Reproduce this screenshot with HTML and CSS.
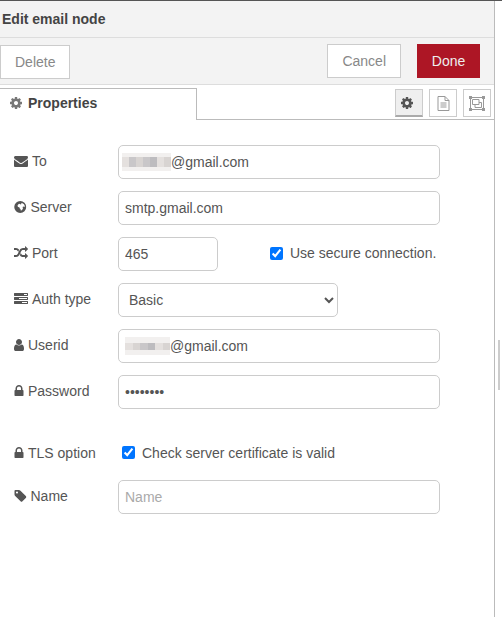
FILE: index.html
```html
<!DOCTYPE html>
<html lang="en">
<head>
<meta charset="utf-8">
<title>Edit email node</title>
<link rel="stylesheet" href="styles.css">
</head>
<body>
<svg class="defs" aria-hidden="true">
  <symbol id="i-cog" viewBox="0 0 1792 1792"><path d="M1152 896q0-106-75-181t-181-75-181 75-75 181 75 181 181 75 181-75 75-181zm512-109v222q0 12-8 23t-20 13l-185 28q-19 54-39 91 35 50 107 138 10 12 10 25t-9 23q-27 37-99 108t-94 71q-12 0-26-9l-138-108q-44 23-91 38-16 136-29 186-7 28-36 28h-222q-14 0-24.500-8.500t-11.500-21.500l-28-184q-49-16-90-37l-141 107q-10 9-25 9-14 0-25-11-126-114-165-168-7-10-7-23 0-12 8-23 15-21 51-66.500t54-70.500q-27-50-41-99l-183-27q-13-2-21-12.500t-8-23.500v-222q0-12 8-23t19-13l186-28q14-46 39-92-40-57-107-138-10-12-10-24 0-10 9-23 26-36 98.500-107.500t94.500-71.500q13 0 26 10l138 107q44-23 91-38 16-136 29-186 7-28 36-28h222q14 0 24.500 8.500t11.500 21.500l28 184q49 16 90 37l142-107q9-9 24-9 13 0 25 10 129 119 165 170 7 8 7 22 0 12-8 23-15 21-51 66.500t-54 70.500q26 50 41 98l183 28q13 2 21 12.500t8 23.500z"/></symbol>
  <symbol id="i-envelope" viewBox="0 0 1792 1792"><path d="M1792 710v794q0 66-47 113t-113 47h-1472q-66 0-113-47t-47-113v-794q44 49 101 87 362 246 497 345 57 42 92.500 65.500t94.500 48 110 24.500h2q51 0 110-24.500t94.500-48 92.500-65.500q170-123 498-345 57-39 100-87zm0-294q0 79-49 151t-122 123q-376 261-468 325-10 7-42.500 30.500t-54 38-52 32.500-57.500 27-50 9h-2q-23 0-50-9t-57.500-27-52-32.500-54-38-42.500-30.500q-91-64-262-182.500t-205-142.500q-62-42-117-115.500t-55-136.500q0-78 41.500-130t118.500-52h1472q65 0 112.500 47t47.500 113z"/></symbol>
  <symbol id="i-globe" viewBox="128 0 1536 1792"><path fill-rule="evenodd" d="M896 128a768 768 0 1 0 0 1536a768 768 0 0 0 0-1536zM1180 400l190 130l110 230l-40 120l-130-60l-120 60l60 170l-100 190l-170 130l-60-220l-110-90l-30-120l-170-60l-70-160l110-170l180-60l90 70l120-60l-50-100z"/></symbol>
  <symbol id="i-random" viewBox="0 0 1792 1792"><path d="M666 481q-60 92-137 273-22-45-37-72.500t-40.500-63.500-51-56.500-63-35-81.500-14.500h-224q-14 0-23-9t-9-23v-192q0-14 9-23t23-9h224q250 0 410 225zm1126 799q0 14-9 23l-320 320q-9 9-23 9-13 0-22.500-9.500t-9.500-22.500v-192q-32 0-85 .5t-81 1-73-1-71-5-64-10.500-63-18.500-58-28.500-59-40-55-53.500-56-69.500q59-93 136-273 22 45 37 72.500t40.500 63.500 51 56.500 63 35 81.500 14.500h256v-192q0-14 9-23t23-9q12 0 24 10l319 319q9 9 9 23zm0-896q0 14-9 23l-320 320q-9 9-23 9-13 0-22.500-9.500t-9.500-22.500v-192h-256q-48 0-87 15t-69 45-51 61.500-45 77.500q-32 62-78 171-29 66-49.500 111t-54 105-64 100-74 83-90 68.500-106.500 42-128 16.500h-224q-14 0-23-9t-9-23v-192q0-14 9-23t23-9h224q48 0 87-15t69-45 51-61.500 45-77.500q32-62 78-171 29-66 49.500-111t54-105 64-100 74-83 90-68.500 106.500-42 128-16.500h256v-192q0-14 9-23t23-9q12 0 24 10l319 319q9 9 9 23z"/></symbol>
  <symbol id="i-tasks" viewBox="0 0 1792 1792"><path d="M1024 1408h640v-128h-640v128zm-384-512h1024v-128h-1024v128zm640-512h384v-128h-384v128zm512 832v256q0 26-19 45t-45 19h-1664q-26 0-45-19t-19-45v-256q0-26 19-45t45-19h1664q26 0 45 19t19 45zm0-512v256q0 26-19 45t-45 19h-1664q-26 0-45-19t-19-45v-256q0-26 19-45t45-19h1664q26 0 45 19t19 45zm0-512v256q0 26-19 45t-45 19h-1664q-26 0-45-19t-19-45v-256q0-26 19-45t45-19h1664q26 0 45 19t19 45z"/></symbol>
  <symbol id="i-user" viewBox="256 0 1280 1792"><path d="M1536 1399q0 109-62.500 187t-150.500 78h-854q-88 0-150.500-78t-62.500-187q0-85 8.500-160.500t31.500-152 58.500-131 94-89 134.500-34.500q131 128 313 128t313-128q76 0 134.500 34.500t94 89 58.500 131 31.500 152 8.500 160.500zm-256-887q0 159-112.500 271.500t-271.500 112.500-271.500-112.500-112.500-271.500 112.500-271.500 271.500-112.500 271.500 112.500 112.500 271.500z"/></symbol>
  <symbol id="i-lock" viewBox="256 0 1280 1792"><path d="M640 768h512v-192q0-106-75-181t-181-75-181 75-75 181v192zm832 96v576q0 40-28 68t-68 28h-960q-40 0-68-28t-28-68v-576q0-40 28-68t68-28h32v-192q0-184 132-316t316-132 316 132 132 316v192h32q40 0 68 28t28 68z"/></symbol>
  <symbol id="i-tag" viewBox="64 0 1600 1792"><path d="M576 448q0-53-37.500-90.500t-90.500-37.500-90.500 37.500-37.500 90.500 37.500 90.500 90.500 37.500 90.500-37.500 37.500-90.500zm1067 576q0 53-37 90l-491 492q-39 37-91 37-53 0-90-37l-715-716q-38-37-64.500-101t-26.500-117v-416q0-52 38-90t90-38h416q53 0 117 26.500t102 64.500l715 714q37 39 37 91z"/></symbol>
</svg>
<div class="shell">
  <main class="panel">
    <header class="title">Edit email node</header>
    <div class="actions">
      <button class="btn btn-delete" type="button">Delete</button>
      <div class="actions-right">
        <button class="btn" type="button">Cancel</button>
        <button class="btn btn-done" type="button">Done</button>
      </div>
    </div>
    <div class="tabs">
      <div class="tab"><svg class="ico tab-ico"><use href="#i-cog"/></svg>Properties</div>
      <div class="tab-tools">
        <span class="tool tool-on"><svg class="ico tool-cog"><use href="#i-cog"/></svg></span>
        <span class="tool"><svg class="tool-svg" viewBox="0 0 13 15"><path class="ln" d="M1 .5h7l4 4v10h-11zM8 .5v4h4M3.500 7h6M3.500 9h6M3.500 11h6"/></svg></span>
        <span class="tool"><svg class="tool-svg tool-wide" viewBox="0 0 16 15"><path class="ln" d="M1.500 1.500h13v12h-13zM3.500 3.500h6.500v5h-6.500zM6 8.500v3h6.500v-5h-2.500"/><path class="nd" d="M0 0h3v3h-3zM13 0h3v3h-3zM0 12h3v3h-3zM13 12h3v3h-3z"/></svg></span>
      </div>
    </div>
    <form class="form">
      <div class="row">
        <label class="lbl"><svg class="ico"><use href="#i-envelope"/></svg>To</label>
        <div class="input wide"><span class="blur blur-to"><i class="b1"></i><i class="b2"></i><i class="b3"></i><i class="b2"></i><i class="b4"></i><i class="b1"></i><i class="b3"></i></span>@gmail.com</div>
      </div>
      <div class="row">
        <label class="lbl"><svg class="ico w12"><use href="#i-globe"/></svg>Server</label>
        <input class="input wide" type="text" value="smtp.gmail.com">
      </div>
      <div class="row">
        <label class="lbl"><svg class="ico"><use href="#i-random"/></svg>Port</label>
        <input class="input port" type="text" value="465">
        <label class="check check-port"><input type="checkbox" checked>Use secure connection.</label>
      </div>
      <div class="row">
        <label class="lbl"><svg class="ico"><use href="#i-tasks"/></svg>Auth type</label>
        <select class="input auth"><option>Basic</option></select>
      </div>
      <div class="row">
        <label class="lbl"><svg class="ico w10"><use href="#i-user"/></svg>Userid</label>
        <div class="input wide"><span class="blur blur-user"><i class="b1"></i><i class="b3"></i><i class="b2"></i><i class="b4"></i><i class="b1"></i><i class="b3"></i></span>@gmail.com</div>
      </div>
      <div class="row">
        <label class="lbl"><svg class="ico w10"><use href="#i-lock"/></svg>Password</label>
        <input class="input wide" type="password" value="password">
      </div>
      <div class="row row-tls">
        <label class="lbl lbl-tls"><svg class="ico w10"><use href="#i-lock"/></svg>TLS option</label>
        <label class="check check-tls"><input type="checkbox" checked>Check server certificate is valid</label>
      </div>
      <div class="row">
        <label class="lbl"><svg class="ico w12"><use href="#i-tag"/></svg>Name</label>
        <input class="input wide" type="text" placeholder="Name">
      </div>
    </form>
  </main>
  <aside class="scroll"><div class="thumb"></div></aside>
</div>
</body>
</html>
```
FILE: styles.css
```css
* { box-sizing: border-box; }
html, body { margin: 0; height: 617px; overflow: hidden; background: #fff; }
body { font-family: "Liberation Sans", Arial, sans-serif; font-size: 14px; color: #555; }
.defs { display: none; }
.shell { display: flex; height: 617px; border-top: 1px solid #555; }
.panel { width: 495px; border-right: 1px solid #bbb; }
.scroll { flex: 1; padding: 339px 2px 0 3px; }
.thumb { height: 50px; background: #ccc; }

.title { height: 37px; padding: 0 2px; line-height: 37px; background: #f3f3f3; border-bottom: 1px solid #ddd; font-weight: 700; color: #444; }
.actions { height: 47px; display: flex; justify-content: space-between; padding: 6px 14px 0 0; background: #f3f3f3; border-bottom: 1px solid #ddd; }
.actions-right { display: flex; gap: 16px; }
.btn { height: 34px; padding: 0 14px; background: #fff; border: 1px solid #ccc; font: 14px "Liberation Sans", Arial, sans-serif; color: #888; }
.btn-delete { width: 70px; margin-top: 1px; }
.btn-done { width: 63px; padding: 0; background: #ad1625; border-color: #ad1625; color: #eee; }

.tabs { height: 35px; display: flex; justify-content: space-between; padding-top: 3px; border-bottom: 1px solid #bbb; position: relative; }
.tab { width: 197px; height: 32px; padding: 0 0 4px 9px; display: flex; align-items: center; background: #fff; border: 1px solid #bbb; border-width: 1px 1px 0 0; font-weight: 700; color: #444; position: relative; }
.tab-tools { display: flex; gap: 6px; padding: 1px 3px 0 0; }
.tool { width: 28px; height: 28px; display: flex; align-items: center; justify-content: center; border: 1px solid #ccc; background: #fff; }
.tool-on { background: #efefef; border-bottom: 2px solid #aaa; }
.tool-cog { width: 14px; height: 14px; margin: 0; fill: #555; }
.tool-svg { width: 13px; height: 15px; }
.tool-wide { width: 16px; }
.ln { fill: none; stroke: #999; stroke-width: 1; }
.nd { fill: #999; }

.ico { width: 14px; height: 14px; margin-right: 4px; fill: #555; flex: none; }
.w10 { width: 10px; }
.w12 { width: 12.500px; }
.tab-ico { fill: #777; margin-right: 5px; }

.form { padding: 25px 0 0 14px; }
.row { display: flex; align-items: center; height: 34px; margin-bottom: 12px; }
.row-tls { height: 24px; margin: 32px 0 15px; }
.lbl { width: 104px; flex: none; display: flex; align-items: center; margin-top: -2px; color: #555; }
.lbl-tls { margin-top: 0; }
.input { height: 34px; padding: 0 6px; background: #fff; border: 1px solid #ccc; border-radius: 5px; font: 14px "Liberation Sans", Arial, sans-serif; color: #555; outline: none; }
.input::placeholder { color: #aaa; opacity: 1; }
div.input { display: flex; align-items: center; }
.wide { width: 322px; }
.port { width: 100px; }
.auth { width: 220px; padding-left: 6px; }
.blur { display: flex; align-items: center; height: 18px; background: #f2f0ef; filter: blur(.6px); }
.blur i { flex: 1; height: 10px; }
.blur-to { width: 49px; margin-left: -3px; }
.blur-user { width: 45px; }
.blur-user i { height: 7px; }
.b1 { background: #e4e0de; }
.b2 { background: #c9c7c9; }
.b3 { background: #d8d4d2; }
.b4 { background: #bdbcbf; }
.check { display: flex; align-items: center; color: #555; }
.check input { width: 13px; height: 13px; margin: 0 7px 0 0; }
.check-port { margin-left: 52px; margin-top: -2px; }
.check-tls { margin-left: 4px; }
.check-tls input { margin-top: -2px; }
```
